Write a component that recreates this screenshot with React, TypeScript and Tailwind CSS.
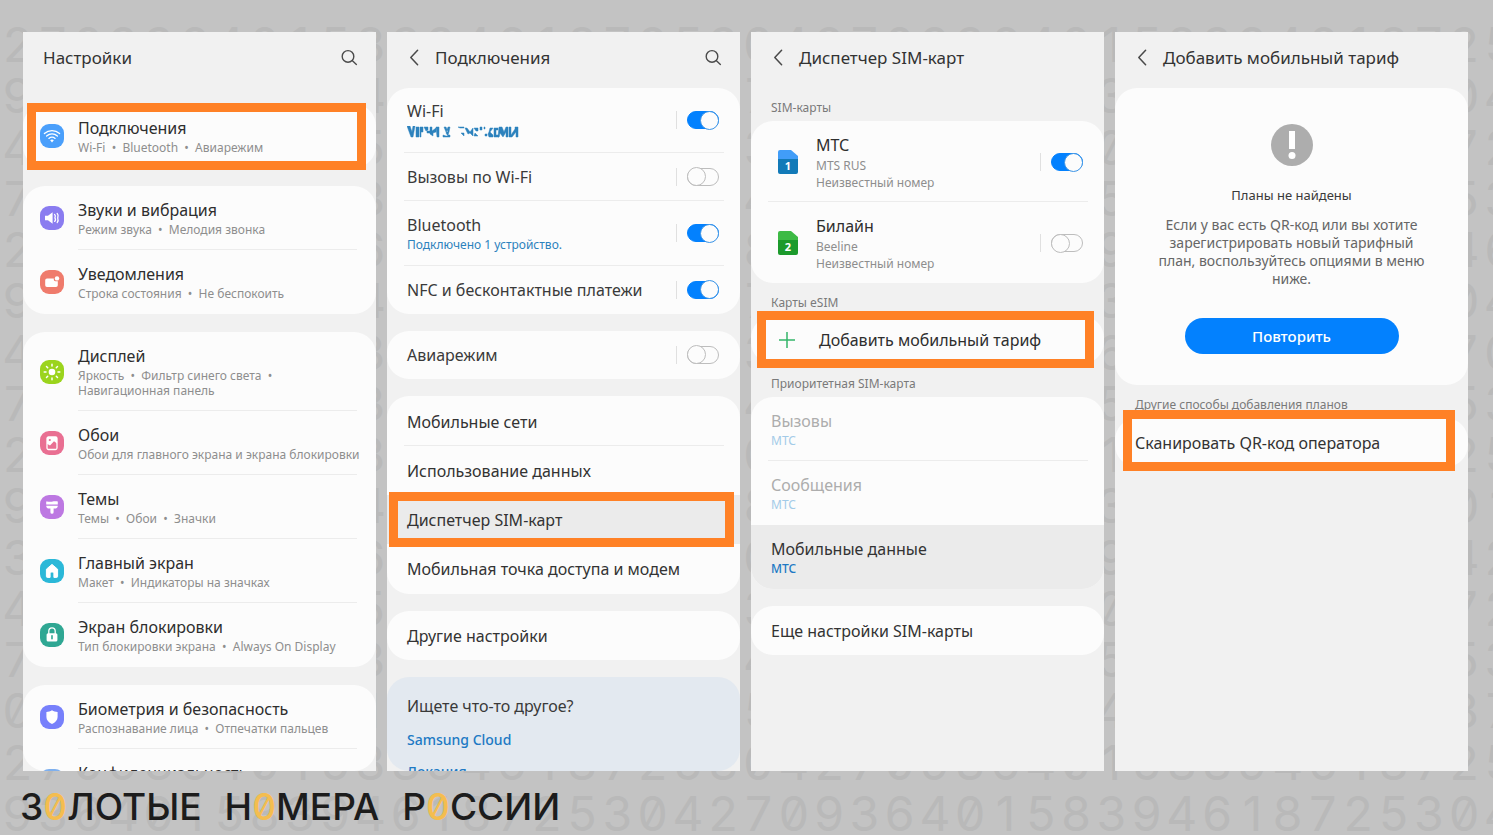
import { ReactNode, useState } from 'react';
import clsx from 'clsx';

const DIGITS = '53042709364015839461872';
// where each backdrop row starts in DIGITS
const ROW_OFFSETS = [4, 7, 3, 5, 22, 7, 10, 5, 4, 16, 8, 3, 5, 2, 4, 7];
const COLUMNS = Array.from({ length: 43 }, (_, i) => i);
// columns that show between the phones; the rest only show above and below them
const GUTTER_COLUMNS = [0, 10, 21, 31, 41, 42];

function DigitBackdrop() {
  return (
    <div
      aria-hidden="true"
      className="absolute top-[27px] bottom-[3px] left-0 -right-6 flex flex-col justify-between font-[Inter,sans-serif] text-[48px] leading-9 font-normal text-[#b9b9b9] slashed-zero select-none"
    >
      {ROW_OFFSETS.map((offset, row) => {
        const edgeRow = row === 0 || row >= ROW_OFFSETS.length - 2;
        return (
          <div key={row} className="grid h-9 grid-cols-[repeat(43,minmax(0,1fr))]">
            {COLUMNS.map((col) => (
              <span key={col} className="flex justify-center">
                {edgeRow || GUTTER_COLUMNS.includes(col) ? DIGITS[(offset + col) % DIGITS.length] : null}
              </span>
            ))}
          </div>
        );
      })}
    </div>
  );
}

function Highlight({ className }: { className: string }) {
  return <span className={clsx('pointer-events-none absolute z-10 border-9 border-[#ff8126]', className)} />;
}

function Phone({ children }: { children: ReactNode }) {
  return <section className="flex min-h-0 min-w-0 flex-col overflow-hidden bg-[#f1f1f1]">{children}</section>;
}

function Card({ children, className }: { children: ReactNode; className?: string }) {
  return <div className={clsx('relative rounded-[22px]', className ?? 'shrink-0 bg-[#fcfcfc]')}>{children}</div>;
}

function SearchButton() {
  return (
    <button type="button" aria-label="Поиск" className="ml-auto">
      <svg viewBox="0 0 18 18" className="size-[18px]" fill="none" stroke="#4a4a4a" strokeWidth="1.4">
        <circle cx="8" cy="7.4" r="5.8" />
        <path d="M12.2 11.6 16.4 15.4" strokeLinecap="round" />
      </svg>
    </button>
  );
}

function Header({ title, back, search, className }: { title: string; back?: boolean; search?: boolean; className?: string }) {
  return (
    <header className={clsx('flex shrink-0 items-center pr-[18px]', className ?? 'h-14 pb-1', back ? 'pl-[22px]' : 'pl-5')}>
      {back && (
        <button type="button" aria-label="Назад" className="mr-4">
          <svg viewBox="0 0 10 18" className="h-[18px] w-[10px]" fill="none" stroke="#4a4a4a" strokeWidth="1.5">
            <path d="M8.6 1.2 1.8 8.500l6.800 7.300" strokeLinecap="round" strokeLinejoin="round" />
          </svg>
        </button>
      )}
      <h2 className="text-[17px] leading-6 whitespace-nowrap text-[#333]">{title}</h2>
      {search && <SearchButton />}
    </header>
  );
}

function Toggle({ label, on = false }: { label: string; on?: boolean }) {
  const [checked, setChecked] = useState(on);
  return (
    <span className="flex shrink-0 items-center border-l border-[#e0e0e0] pl-[10px]">
      <input
        type="checkbox"
        role="switch"
        aria-label={label}
        checked={checked}
        onChange={(e) => setChecked(e.target.checked)}
        className="flex h-[18px] w-8 cursor-pointer appearance-none items-center rounded-full border border-[#bdbdbd] bg-[#fcfcfc] before:-ml-px before:size-[19px] before:shrink-0 before:rounded-full before:border before:border-[#bdbdbd] before:bg-[#fcfcfc] checked:justify-end checked:border-[#0381fe] checked:bg-[#0381fe] checked:before:-mr-px checked:before:ml-0 checked:before:border-[#3d95e6]"
      />
    </span>
  );
}

function SectionLabel({ children }: { children: ReactNode }) {
  return <h3 className="h-[33px] shrink-0 pt-3 pl-5 text-[12px] leading-4 text-[#7a7a7a]">{children}</h3>;
}

/* ---- Settings list ---- */

function SettingIcon({ color, children }: { color: string; children: ReactNode }) {
  return (
    <span className={clsx('flex size-6 shrink-0 items-center justify-center rounded-[9px]', color)}>
      <svg viewBox="0 0 24 24" className="size-6" fill="none">
        {children}
      </svg>
    </span>
  );
}

const wifiIcon = (
  <SettingIcon color="bg-[#4a9ffb]">
    <g stroke="#fff" strokeWidth="1.3" strokeLinecap="round">
      <path d="M4.4 9.6c4.4-3.9 10.8-3.9 15.2 0" />
      <path d="M6.6 12.1c3.2-2.8 7.6-2.8 10.8 0" />
      <path d="M8.9 14.4c1.9-1.5 4.3-1.5 6.2 0" />
    </g>
    <path d="M10.2 16.2c1-.8 2.6-.8 3.6 0L12 18.6z" fill="#fff" />
  </SettingIcon>
);

const soundIcon = (
  <SettingIcon color="bg-[#8a7cf0]">
    <path d="M5 9.8h3l4.6-3.6v11.6L8 14.2H5z" fill="#fff" />
    <path d="M14.6 8.4c1.400 1.200.8 2.200.3 3.400.8 1.200 1 2.400-.3 3.600M17.200 7.400c1.600 1.400.9 3 .5 4.600.6 1.600.8 3.200-.5 4.600" stroke="#fff" strokeWidth="1.300" strokeLinecap="round" />
  </SettingIcon>
);

const noticeIcon = (
  <SettingIcon color="bg-[#ef7b6c]">
    <path d="M7 8.400h6.800v1.200c0 1 .7 1.700 1.700 1.700h2.300v4a1.800 1.800 0 0 1-1.800 1.800H7a1.800 1.800 0 0 1-1.800-1.800v-5.100A1.800 1.800 0 0 1 7 8.400z" fill="#fff" />
    <circle cx="17" cy="8.400" r="2.200" fill="#fff" />
  </SettingIcon>
);

const displayIcon = (
  <SettingIcon color="bg-[#9bd41d]">
    <circle cx="12" cy="12" r="3.300" fill="#fff" />
    <path
      d="M12 4.200v1.800M12 18v1.800M4.200 12H6M18 12h1.800M6.500 6.500l1.200 1.200M16.300 16.300l1.200 1.200M17.500 6.500l-1.200 1.200M7.700 16.300l-1.200 1.200"
      stroke="#fff"
      strokeWidth="1.500"
      strokeLinecap="round"
    />
  </SettingIcon>
);

const wallpaperIcon = (
  <SettingIcon color="bg-[#e96f92]">
    <rect x="7" y="6" width="10" height="12.500" rx="1.500" stroke="#fff" strokeWidth="1.300" />
    <path d="M7 6h10v6.500l-3-2.300-4 4.300-3-1.700z" fill="#fff" />
    <circle cx="9.800" cy="9" r="1.100" fill="#e96f92" />
  </SettingIcon>
);

const themesIcon = (
  <SettingIcon color="bg-[#bd78e2]">
    <path d="M6.200 6.500c2-.2 3.600.6 5.600.2 2-.4 3.800-.6 6-.2v3H6.200z" fill="#fff" />
    <path d="M6.200 10.700h11.600c0 1.900-1.200 2.800-3 2.800h-1.200v3.700a1.600 1.600 0 0 1-3.200 0v-3.700H9.200c-1.800 0-3-.9-3-2.800z" fill="#fff" />
  </SettingIcon>
);

const homeIcon = (
  <SettingIcon color="bg-[#2bb8d8]">
    <path d="M12 5.400 6.400 10.200v7.200c0 .6.400 1 1 1h2.700v-3.600c0-2.400 3.800-2.400 3.800 0v3.600h2.700c.6 0 1-.4 1-1v-7.200z" fill="#fff" stroke="#fff" strokeLinejoin="round" />
  </SettingIcon>
);

const lockIcon = (
  <SettingIcon color="bg-[#2fa793]">
    <path d="M8.800 11V8a3.200 3.200 0 0 1 6.400 0v3" stroke="#fff" strokeWidth="1.300" />
    <rect x="6.600" y="10.200" width="10.800" height="8.400" rx="1.500" fill="#fff" />
    <path d="M12 12.800v3" stroke="#2fa793" strokeWidth="1.600" strokeLinecap="round" />
  </SettingIcon>
);

const shieldIcon = (
  <SettingIcon color="bg-[#7780fb]">
    <path d="M12 5.200c1.700 1.100 3.500 1.600 5.600 1.700v5.100c0 3.300-2.200 5.400-5.600 6.900-3.400-1.500-5.600-3.600-5.600-6.900V6.900c2.100-.1 3.900-.6 5.600-1.700z" fill="#fff" />
  </SettingIcon>
);

const privacyIcon = <SettingIcon color="bg-[#7fb0ee]">{null}</SettingIcon>;

interface Setting {
  icon: ReactNode;
  title: string;
  details: string;
}

const settingGroups: Setting[][] = [
  [{ icon: wifiIcon, title: 'Подключения', details: 'Wi-Fi  •  Bluetooth  •  Авиарежим' }],
  [
    { icon: soundIcon, title: 'Звуки и вибрация', details: 'Режим звука  •  Мелодия звонка' },
    { icon: noticeIcon, title: 'Уведомления', details: 'Строка состояния  •  Не беспокоить' },
  ],
  [
    { icon: displayIcon, title: 'Дисплей', details: 'Яркость  •  Фильтр синего света  •\nНавигационная панель' },
    { icon: wallpaperIcon, title: 'Обои', details: 'Обои для главного экрана и экрана блокировки' },
    { icon: themesIcon, title: 'Темы', details: 'Темы  •  Обои  •  Значки' },
    { icon: homeIcon, title: 'Главный экран', details: 'Макет  •  Индикаторы на значках' },
    { icon: lockIcon, title: 'Экран блокировки', details: 'Тип блокировки экрана  •  Always On Display' },
  ],
  [
    { icon: shieldIcon, title: 'Биометрия и безопасность', details: 'Распознавание лица  •  Отпечатки пальцев' },
    { icon: privacyIcon, title: 'Конфиденциальность', details: '' },
  ],
];

function SettingRow({ setting, last }: { setting: Setting; last: boolean }) {
  return (
    <button type="button" className="flex w-full items-center gap-[14px] pr-[19px] pl-[17px] text-left">
      {setting.icon}
      <span className={clsx('min-w-0 flex-1 border-b py-3', last ? 'border-transparent' : 'border-[#ececec]')}>
        <span className="block text-[16px] leading-6 text-[#2e2e2e]">{setting.title}</span>
        <span className="block min-h-[15px] text-[12px] leading-[15px] whitespace-pre text-[#8e8e8e]">{setting.details}</span>
      </span>
    </button>
  );
}

function SettingsScreen() {
  return (
    <Phone>
      <Header title="Настройки" search className="h-[72px] pb-5" />
      <div className="flex min-h-0 flex-1 flex-col gap-[18px]">
        {settingGroups.map((group, i) => (
          <Card key={i} className={i === 3 ? 'min-h-0 flex-1 overflow-hidden bg-[#fcfcfc]' : undefined}>
            {group.map((setting, j) => (
              <SettingRow key={setting.title} setting={setting} last={j === group.length - 1} />
            ))}
            {i === 0 && <Highlight className="-top-px -bottom-0.5 right-[10px] left-1" />}
          </Card>
        ))}
      </div>
    </Phone>
  );
}

/* ---- Connections ---- */

function MaskedName() {
  return (
    <svg viewBox="0 0 112 12" className="my-[3px] block h-3 w-28" fill="#2d82bd" stroke="#2d82bd" strokeWidth=".8" strokeOpacity=".6">
      <path d="M0 0h3l2 6 1-6h2L6 11H4zM9 1h3v10H9zM13 1h3v5h-2v5h-1zM17 1h4v3l-2 1zM20 5h3v2h-3zM23 1h2v4l4-3v4l-3 1v3l-3-2zM29 1h3v10h-2zM37 1h2l2 5h-2zM43 1h-2l-2 6 2 3h-2l-3-1v2h7V9h-2l1-3zM51 1h6v1h-4zM54 7h3v3zM58 2h2l3 4 3-4v8l-3-3-2 1-1-2zM67 2h4v3h-2zM68 7l3 3h-4zM73 1h2v3h-2zM77 1h1v2h-1zM78 8h2v2h-2zM83 2h3l-3 4 3 3v2h-4l-1-3 1-2zM87 2h4v2h-2v5h3v2h-5zM92 1h3l2 5 2-5h2v10h-2V6l-3 5-3-4-1 4h-1zM102 1h2v8l4-6V1h3v10h-2V6l-4 5h-3z" />
    </svg>
  );
}

function ConnectionRow({ title, sub, on, last }: { title: string; sub?: ReactNode; on?: boolean; last?: boolean }) {
  return (
    <div className={clsx('mr-4 ml-[17px] flex items-center justify-between border-b pr-[5px] pl-[3px]', sub ? 'h-[65px]' : 'h-12', last ? 'border-transparent' : 'border-[#ececec]')}>
      <div>
        <p className="text-[16px] leading-6 text-[#3a3a3a]">{title}</p>
        {sub}
      </div>
      <Toggle label={title} on={on} />
    </div>
  );
}

function LinkRow({ title, divider, active }: { title: string; divider?: boolean; active?: boolean }) {
  return (
    <button type="button" className={clsx('relative flex h-[49px] w-full pr-4 pl-[17px] text-left', active && 'bg-[#ebebeb]')}>
      <span className={clsx('flex flex-1 items-center border-b pt-0.5 pl-[3px] text-[16px] leading-6 text-[#333]', divider ? 'border-[#ececec]' : 'border-transparent')}>
        {title}
      </span>
      {active && <Highlight className="-inset-y-[3px] right-1.5 left-0.5" />}
    </button>
  );
}

function ConnectionsScreen() {
  return (
    <Phone>
      <Header title="Подключения" back search />
      <div className="flex min-h-0 flex-1 flex-col gap-[17px]">
        <Card>
          <ConnectionRow title="Wi-Fi" on sub={<MaskedName />} />
          <ConnectionRow title="Вызовы по Wi-Fi" />
          <ConnectionRow title="Bluetooth" on sub={<p className="text-[12px] leading-4 text-[#2d82bd]">Подключено 1 устройство.</p>} />
          <ConnectionRow title="NFC и бесконтактные платежи" on last />
        </Card>
        <Card>
          <ConnectionRow title="Авиарежим" last />
        </Card>
        <Card className="shrink-0 bg-[#fcfcfc] py-px">
          <LinkRow title="Мобильные сети" divider />
          <LinkRow title="Использование данных" />
          <LinkRow title="Диспетчер SIM-карт" active />
          <LinkRow title="Мобильная точка доступа и модем" />
        </Card>
        <Card>
          <LinkRow title="Другие настройки" />
        </Card>
        <Card className="flex min-h-0 flex-1 flex-col items-start overflow-hidden bg-[#e3e9f0] px-5 pt-[17px]">
          <p className="shrink-0 text-[16px] leading-6 text-[#3a3a3a]">Ищете что-то другое?</p>
          <a href="#cloud" className="mt-3 shrink-0 text-[14px] leading-5 font-medium text-[#2079c4]">Samsung Cloud</a>
          <a href="#location" className="mt-3 shrink-0 text-[14px] leading-5 font-medium text-[#2079c4]">Локация</a>
        </Card>
      </div>
    </Phone>
  );
}

/* ---- SIM manager ---- */

function SimIcon({ slot, top, bottom }: { slot: number; top: string; bottom: string }) {
  return (
    <svg viewBox="0 0 20 24" className="h-6 w-5 shrink-0">
      <path d="M2 0h11l7 6v4H0V2a2 2 0 0 1 2-2z" fill={top} />
      <path d="M0 9h20v13a2 2 0 0 1-2 2H2a2 2 0 0 1-2-2z" fill={bottom} />
      <text x="10" y="20" textAnchor="middle" fontSize="11" fontWeight="700" fill="#fff">
        {slot}
      </text>
    </svg>
  );
}

function SimRow({ icon, name, operator, on, last }: { icon: ReactNode; name: string; operator: string; on?: boolean; last?: boolean }) {
  return (
    <div className={clsx('mr-4 ml-[17px] flex items-center border-b pt-3 pr-[5px] pb-[10px] pl-[10px]', last ? 'border-transparent' : 'border-[#ececec]')}>
      {icon}
      <div className="ml-[18px] flex-1">
        <p className="text-[16px] leading-6 text-[#2e2e2e]">{name}</p>
        <p className="text-[12px] leading-[17px] text-[#8e8e8e]">{operator}</p>
        <p className="text-[12px] leading-[17px] text-[#8e8e8e]">Неизвестный номер</p>
      </div>
      <Toggle label={name} on={on} />
    </div>
  );
}

function PreferredRow({ title, disabled, divider }: { title: string; disabled?: boolean; divider?: boolean }) {
  return (
    <button
      type="button"
      disabled={disabled}
      className={clsx('flex h-16 w-full pr-4 pl-[17px] text-left', !disabled && 'rounded-b-[22px] bg-[#ebebeb]')}
    >
      <span className={clsx('flex-1 border-b pt-3 pl-[3px]', divider ? 'border-[#ececec]' : 'border-transparent')}>
        <span className={clsx('block text-[16px] leading-6', disabled ? 'text-[#adadad]' : 'text-[#333]')}>{title}</span>
        <span className={clsx('block text-[12px] leading-4', disabled ? 'text-[#a3cbe8]' : 'font-medium text-[#2079c4]')}>МТС</span>
      </span>
    </button>
  );
}

function SimManagerScreen() {
  return (
    <Phone>
      <Header title="Диспетчер SIM-карт" back />
      <SectionLabel>SIM-карты</SectionLabel>
      <Card>
        <SimRow icon={<SimIcon slot={1} top="#419df8" bottom="#127ab8" />} name="МТС" operator="MTS RUS" on />
        <SimRow icon={<SimIcon slot={2} top="#3dba45" bottom="#1c9a2c" />} name="Билайн" operator="Beeline" last />
      </Card>
      <SectionLabel>Карты eSIM</SectionLabel>
      <Card>
        <button type="button" className="flex h-12 w-full items-center gap-6 pl-7 text-left text-[16px] leading-6 text-[#2e2e2e]">
          <svg viewBox="0 0 16 16" className="size-4" fill="none" stroke="#35b56a" strokeWidth="1.500">
            <path d="M8 0v16M0 8h16" />
          </svg>
          Добавить мобильный тариф
        </button>
        <Highlight className="-top-[5px] right-[10px] -bottom-1 left-1.5" />
      </Card>
      <SectionLabel>Приоритетная SIM-карта</SectionLabel>
      <Card>
        <PreferredRow title="Вызовы" disabled divider />
        <PreferredRow title="Сообщения" disabled />
        <PreferredRow title="Мобильные данные" />
      </Card>
      <Card className="mt-[17px] shrink-0 bg-[#fcfcfc]">
        <LinkRow title="Еще настройки SIM-карты" />
      </Card>
    </Phone>
  );
}

/* ---- Add mobile plan ---- */

function AddPlanScreen() {
  return (
    <Phone>
      <Header title="Добавить мобильный тариф" back />
      <Card className="flex shrink-0 flex-col items-center bg-[#fcfcfc] px-9 pt-9 pb-[31px] text-center">
        <svg viewBox="0 0 42 42" className="size-[42px]">
          <circle cx="21" cy="21" r="21" fill="#adadad" />
          <path d="M18 7h6v18h-6z" fill="#fff" />
          <circle cx="21" cy="31.500" r="3.500" fill="#fff" />
        </svg>
        <h3 className="mt-5 text-[13px] leading-[18px] text-[#3a3a3a]">Планы не найдены</h3>
        <p className="mt-3 text-[14px] leading-[18px] text-[#666]">
          Если у вас есть QR-код или вы хотите
          <br />
          зарегистрировать новый тарифный
          <br />
          план, воспользуйтесь опциями в меню
          <br />
          ниже.
        </p>
        <button type="button" className="mt-[30px] h-9 w-[214px] rounded-full bg-[#0381fe] text-[15px] leading-5 font-medium text-white">
          Повторить
        </button>
      </Card>
      <SectionLabel>Другие способы добавления планов</SectionLabel>
      <Card>
        <LinkRow title="Сканировать QR-код оператора" />
        <Highlight className="-top-2 right-[13px] -bottom-1 left-2" />
      </Card>
    </Phone>
  );
}

function Zero() {
  return <span className="text-[#f4bd4f]">0</span>;
}

export default function App() {
  return (
    <main className="relative flex h-screen flex-col overflow-hidden bg-[#c3c3c3] pt-8 font-['Noto_Sans',sans-serif]">
      <DigitBackdrop />
      <div className="relative grid min-h-0 flex-1 grid-cols-4 grid-rows-1 gap-[11px] pr-[25px] pl-[23px]">
        <SettingsScreen />
        <ConnectionsScreen />
        <SimManagerScreen />
        <AddPlanScreen />
      </div>
      <footer className="relative h-16 shrink-0 pt-3 pl-5">
        <h1 className="flex gap-[23px] font-[Inter,sans-serif] text-[37px] leading-12 font-medium whitespace-nowrap text-[#1c1c1c] slashed-zero">
          <span>З<Zero />ЛОТЫЕ</span>
          <span>Н<Zero />МЕРА</span>
          <span>Р<Zero />ССИИ</span>
        </h1>
      </footer>
    </main>
  );
}
